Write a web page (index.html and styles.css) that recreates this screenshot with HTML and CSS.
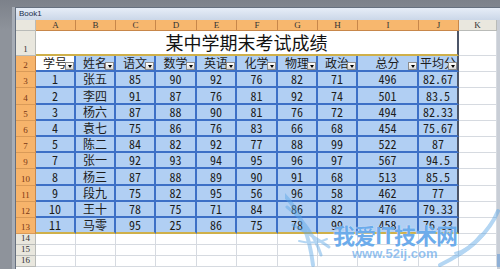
FILE: index.html
```html
<!DOCTYPE html>
<html lang="zh">
<head>
<meta charset="utf-8">
<title>Book1</title>
<link rel="stylesheet" href="styles.css">
</head>
<body>
<div class="desk">
  <div class="win">
    <div class="titlebar">Book1</div>
    <div class="main">
      <div class="sheet">
        <!-- column headers -->
        <div class="corner"></div>
        <div class="ch sel">A</div><div class="ch sel">B</div><div class="ch sel">C</div><div class="ch sel">D</div><div class="ch sel">E</div>
        <div class="ch sel">F</div><div class="ch sel">G</div><div class="ch sel">H</div><div class="ch sel">I</div><div class="ch sel">J</div>
        <div class="ch">K</div>
        <!-- row 1 -->
        <div class="rh">1</div>
        <div class="title">某中学期末考试成绩</div>
        <div class="c"></div>
        <!-- row 2 -->
        <div class="rh sel">2</div>
        <div class="h act">学号<span class="dd"></span></div>
        <div class="h">姓名<span class="dd"></span></div>
        <div class="h">语文<span class="dd"></span></div>
        <div class="h">数学<span class="dd"></span></div>
        <div class="h">英语<span class="dd"></span></div>
        <div class="h">化学<span class="dd"></span></div>
        <div class="h">物理<span class="dd"></span></div>
        <div class="h">政治<span class="dd"></span></div>
        <div class="h">总分<span class="dd"></span></div>
        <div class="h last">平均分<span class="dd"></span></div>
        <div class="c"></div>
        <!-- row 3 -->
        <div class="rh sel">3</div>
        <div class="d">1</div><div class="d">张五</div><div class="d">85</div><div class="d">90</div><div class="d">92</div><div class="d">76</div><div class="d">82</div><div class="d">71</div><div class="d">496</div><div class="d last">82.67</div>
        <div class="c"></div>
        <!-- row 4 -->
        <div class="rh sel">4</div>
        <div class="d">2</div><div class="d">李四</div><div class="d">91</div><div class="d">87</div><div class="d">76</div><div class="d">81</div><div class="d">92</div><div class="d">74</div><div class="d">501</div><div class="d last">83.5</div>
        <div class="c"></div>
        <!-- row 5 -->
        <div class="rh sel">5</div>
        <div class="d">3</div><div class="d">杨六</div><div class="d">87</div><div class="d">88</div><div class="d">90</div><div class="d">81</div><div class="d">76</div><div class="d">72</div><div class="d">494</div><div class="d last">82.33</div>
        <div class="c"></div>
        <!-- row 6 -->
        <div class="rh sel">6</div>
        <div class="d">4</div><div class="d">袁七</div><div class="d">75</div><div class="d">86</div><div class="d">76</div><div class="d">83</div><div class="d">66</div><div class="d">68</div><div class="d">454</div><div class="d last">75.67</div>
        <div class="c"></div>
        <!-- row 7 -->
        <div class="rh sel">7</div>
        <div class="d">5</div><div class="d">陈二</div><div class="d">84</div><div class="d">82</div><div class="d">92</div><div class="d">77</div><div class="d">88</div><div class="d">99</div><div class="d">522</div><div class="d last">87</div>
        <div class="c"></div>
        <!-- row 9 -->
        <div class="rh sel">9</div>
        <div class="d">7</div><div class="d">张一</div><div class="d">92</div><div class="d">93</div><div class="d">94</div><div class="d">95</div><div class="d">96</div><div class="d">97</div><div class="d">567</div><div class="d last">94.5</div>
        <div class="c"></div>
        <!-- row 10 -->
        <div class="rh sel">10</div>
        <div class="d">8</div><div class="d">杨三</div><div class="d">87</div><div class="d">88</div><div class="d">89</div><div class="d">90</div><div class="d">91</div><div class="d">68</div><div class="d">513</div><div class="d last">85.5</div>
        <div class="c"></div>
        <!-- row 11 -->
        <div class="rh sel">11</div>
        <div class="d">9</div><div class="d">段九</div><div class="d">75</div><div class="d">82</div><div class="d">95</div><div class="d">56</div><div class="d">96</div><div class="d">58</div><div class="d">462</div><div class="d last">77</div>
        <div class="c"></div>
        <!-- row 12 -->
        <div class="rh sel">12</div>
        <div class="d">10</div><div class="d">王十</div><div class="d">78</div><div class="d">75</div><div class="d">71</div><div class="d">84</div><div class="d">86</div><div class="d">82</div><div class="d">476</div><div class="d last">79.33</div>
        <div class="c"></div>
        <!-- row 13 -->
        <div class="rh sel">13</div>
        <div class="d b">11</div><div class="d b">马零</div><div class="d b">95</div><div class="d b">25</div><div class="d b">86</div><div class="d b">75</div><div class="d b">78</div><div class="d b">99</div><div class="d b">458</div><div class="d b last">76.33</div>
        <div class="c"></div>
        <!-- row 14 -->
        <div class="rh">14</div>
        <div class="c"></div><div class="c"></div><div class="c"></div><div class="c"></div><div class="c"></div><div class="c"></div><div class="c"></div><div class="c"></div><div class="c"></div><div class="c"></div><div class="c"></div>
        <!-- row 15 -->
        <div class="rh">15</div>
        <div class="c"></div><div class="c"></div><div class="c"></div><div class="c"></div><div class="c"></div><div class="c"></div><div class="c"></div><div class="c"></div><div class="c"></div><div class="c"></div><div class="c"></div>
        <!-- row 16 -->
        <div class="rh">16</div>
        <div class="c"></div><div class="c"></div><div class="c"></div><div class="c"></div><div class="c"></div><div class="c"></div><div class="c"></div><div class="c"></div><div class="c"></div><div class="c"></div><div class="c"></div>
      </div>
      <div class="vscroll"><span class="thumb"></span></div>
    </div>
  </div>
  <div class="watermark">
    <svg class="wings" width="215" height="84" viewBox="0 0 215 84">
      <g fill="none" stroke="#5aa6e6" stroke-linecap="round" opacity="0.45">
        <path d="M -5 6 Q 22 30 28 80" stroke-width="4"/>
        <path d="M 2 22 Q 26 40 36 70" stroke-width="3"/>
        <path d="M 8 40 Q 30 52 44 62" stroke-width="3"/>
        <path d="M 14 56 Q 30 60 42 54" stroke-width="2"/>
        <path d="M 213 26 Q 200 58 155 80" stroke-width="4"/>
        <path d="M 205 40 Q 192 62 166 74" stroke-width="3"/>
        <path d="M 195 50 Q 185 64 170 68" stroke-width="2"/>
      </g>
    </svg>
    <div class="wm-title">我爱IT技术网</div>
    <div class="wm-url">www.52ij.com</div>
  </div>
</div>
</body>
</html>
```

FILE: styles.css
```css
* { box-sizing: border-box; }
html, body { margin: 0; padding: 0; }
body {
  width: 500px;
  height: 269px;
  overflow: hidden;
  background: #8c9199;
  font-family: "Noto Sans CJK SC", sans-serif;
}
.desk {
  position: relative;
  height: 269px;
  padding: 7px 0 0 15px;
  display: flex;
  background: linear-gradient(#7c818a, #8e939b 30px);
}
.win {
  flex: 1;
  display: flex;
  flex-direction: column;
  border-left: 1px solid #66707f;
  border-top: 1px solid #66707f;
  background: #dfe5ee;
  box-shadow: -3px 0 0 #a7adb6;
}
.titlebar {
  height: 12px;
  padding-left: 3px;
  font: 8px/12px "Liberation Sans", sans-serif;
  color: #1b2d4a;
  background: linear-gradient(#e6edf7, #cbd7e8);
}
.main {
  flex: 1;
  display: flex;
}
.sheet {
  flex: 1;
  display: grid;
  grid-template-columns: 20px 40px 40px 40px 41px 40px 41px 40px 40px 61px 40px 1fr;
  grid-template-rows: 11px 25px 16px 16px 17px 16px 16px 16px 16px 17px 16px 16px 16px 11px 11px 11px 1fr;
  background: #fff;
}
.corner, .ch, .rh {
  background: #e9e7de;
  border-right: 1px solid #b9bbb8;
  border-bottom: 1px solid #b9bbb8;
  color: #333;
  display: flex;
  justify-content: center;
  font: 9px/1 "Liberation Serif", serif;
}
.ch { align-items: center; }
.ch.sel {
  background: #f7b76e;
  border-right-color: #c8874a;
  border-bottom-color: #c8874a;
}
.rh {
  align-items: flex-end;
  padding-bottom: 1px;
}
.rh.sel {
  background: #f7b46b;
  color: #7a3614;
  border-right-color: #c8874a;
  border-bottom-color: #d99a58;
}
.c {
  border-right: 1px solid #d6dae0;
  border-bottom: 1px solid #d6dae0;
}
.title {
  grid-column: span 10;
  border-bottom: 2px solid #cfb04a;
  border-right: 2px solid #4c5568;
  display: flex;
  justify-content: center;
  align-items: flex-end;
  padding-bottom: 1px;
  font-size: 18px;
  line-height: 22px;
  color: #111;
}
.h, .d {
  position: relative;
  background: #b1cff3;
  border-right: 2px solid #3d70c6;
  border-bottom: 2px solid #3d70c6;
  display: flex;
  justify-content: center;
  align-items: flex-end;
  white-space: nowrap;
  font-family: "Noto Sans Mono CJK SC", "Noto Sans CJK SC", monospace;
  font-size: 12px;
  line-height: 14px;
  color: #1c1c1c;
}
.h.act { background: #fff; }
.h.last { overflow: hidden; }
.d.b { border-bottom-color: #cfb04a; }
.h.last, .d.last { border-right-color: #4c5568; }
.dd {
  position: absolute;
  right: 0;
  bottom: 0;
  width: 9px;
  height: 8px;
  border: 1px solid #8c8c8c;
  background: linear-gradient(#ffffff, #d8d8d8);
}
.dd::after {
  content: "";
  position: absolute;
  left: 1.5px;
  top: 2px;
  border-left: 2.5px solid transparent;
  border-right: 2.5px solid transparent;
  border-top: 3px solid #000;
}
.vscroll {
  width: 3px;
  background: #c9ced6;
  display: flex;
  flex-direction: column;
  justify-content: flex-end;
}
.thumb {
  height: 13px;
  margin-bottom: 2px;
  background: #8fb0d6;
}
.watermark {
  position: absolute;
  left: 285px;
  top: 185px;
  width: 215px;
  height: 84px;
  pointer-events: none;
}
.wings {
  position: absolute;
  left: 0;
  top: 0;
}
.wm-title {
  position: absolute;
  left: 48px;
  top: 36px;
  font: bold 22px/26px "Noto Sans CJK SC", sans-serif;
  color: rgba(52, 140, 228, 0.72);
  text-shadow: 0 0 1px #fff;
  letter-spacing: -1px;
}
.wm-url {
  position: absolute;
  left: 67px;
  top: 62px;
  font: bold 13px/14px "Liberation Sans", sans-serif;
  color: rgba(80, 155, 230, 0.6);
}
```
